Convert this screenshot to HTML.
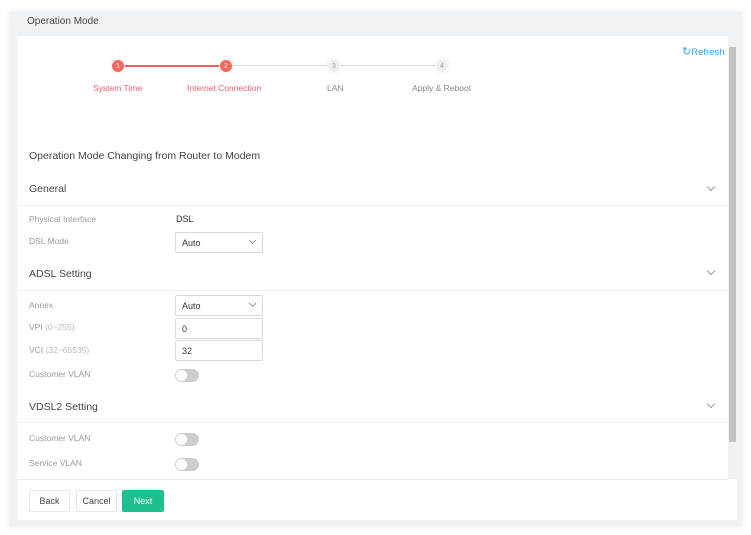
<!DOCTYPE html><html><head><style>
*{margin:0;padding:0;box-sizing:border-box}
body{width:751px;height:535px;background:#fff;font-family:"Liberation Sans",sans-serif;position:relative;overflow:hidden;font-size:9px;color:#666}
.a{position:absolute;white-space:nowrap}
.panel{left:9px;top:12px;width:733px;height:515px;background:#f0f3f5;box-shadow:0 0 6px rgba(0,0,0,.08)}
.card{left:17px;top:36px;width:720px;height:484px;background:#fff}
.sb{left:728px;top:36px;width:9px;height:443px;background:#f1f1f1}
.th{left:729px;top:47px;width:7px;height:395px;background:#c1c1c1}
.line{height:1px;background:#eceff1;left:17px;width:711px}
.lbl{color:#999;font-size:8.5px}
.h{color:#444;font-size:10.5px}
.box{border:1px solid #d9d9d9;border-radius:2px;background:#fff;width:88px;height:21px;left:175px;font-size:9px;color:#333;padding:5px 6px}
.chev{width:6px;height:6px;border-right:1px solid #999;border-bottom:1px solid #999;transform:rotate(45deg)}
.tg{left:175px;width:24px;height:13px;border-radius:7px;background:#ccc}
.tg::after{content:"";position:absolute;left:1px;top:1px;width:11px;height:11px;border-radius:50%;background:#fff}
.dot{width:14px;height:14px;border-radius:50%;font-size:7px;text-align:center;line-height:14px;color:#fff;border:1px solid #fff;box-shadow:0 0 2px rgba(0,0,0,.15)}
.btn{top:490px;height:22px;border:1px solid #e6e6e6;border-radius:2px;font-size:9px;color:#444;text-align:center;line-height:20px;background:#fff}
</style></head><body>
<div class="a panel"></div>
<div class="a" style="left:27px;top:16px;font-size:10px;color:#444">Operation Mode</div>
<div class="a card"></div>
<div class="a sb"></div><div class="a th"></div>
<div class="a" style="left:682px;top:45px;color:#3aa0e0;font-size:9.5px"><span style="font-size:11px">↻</span>Refresh</div>
<div class="a" style="left:124px;top:65px;width:100px;height:2px;background:#ef5c6e"></div>
<div class="a" style="left:232px;top:65px;width:210px;height:1px;background:#ddd"></div>
<div class="a dot" style="left:111px;top:59px;background:#ef6a5e">1</div>
<div class="a dot" style="left:219px;top:59px;background:#ef6a5e">2</div>
<div class="a dot" style="left:327px;top:59px;background:#eee;color:#999">3</div>
<div class="a dot" style="left:435px;top:59px;background:#eee;color:#999">4</div>
<div class="a" style="left:93px;top:83px;color:#ef5c6e;font-size:8.5px">System Time</div>
<div class="a" style="left:187px;top:83px;color:#ef5c6e;font-size:8.5px">Internet Connection</div>
<div class="a" style="left:327px;top:83px;color:#888;font-size:8.5px">LAN</div>
<div class="a" style="left:412px;top:83px;color:#888;font-size:8.5px">Apply &amp; Reboot</div>
<div class="a h" style="left:29px;top:150px">Operation Mode Changing from Router to Modem</div>
<div class="a h" style="left:29px;top:183px">General</div>
<div class="a chev" style="left:708px;top:184px"></div>
<div class="a line" style="top:205px"></div>
<div class="a lbl" style="left:29px;top:214px">Physical Interface</div>
<div class="a" style="left:176px;top:214px;color:#333;font-size:9px">DSL</div>
<div class="a lbl" style="left:29px;top:236px">DSL Mode</div>
<div class="a box" style="top:232px">Auto</div><div class="a chev" style="left:250px;top:238px;width:5px;height:5px"></div>
<div class="a h" style="left:29px;top:268px">ADSL Setting</div>
<div class="a chev" style="left:708px;top:268px"></div>
<div class="a line" style="top:290px"></div>
<div class="a lbl" style="left:29px;top:300px">Annex</div>
<div class="a box" style="top:295px">Auto</div><div class="a chev" style="left:250px;top:301px;width:5px;height:5px"></div>
<div class="a lbl" style="left:29px;top:322px">VPI <span style="color:#bbb">(0~255)</span></div>
<div class="a box" style="top:318px">0</div>
<div class="a lbl" style="left:29px;top:345px">VCI <span style="color:#bbb">(32~65535)</span></div>
<div class="a box" style="top:340px">32</div>
<div class="a lbl" style="left:29px;top:369px">Customer VLAN</div>
<div class="a tg" style="top:369px"></div>
<div class="a h" style="left:29px;top:401px">VDSL2 Setting</div>
<div class="a chev" style="left:708px;top:401px"></div>
<div class="a line" style="top:422px"></div>
<div class="a lbl" style="left:29px;top:433px">Customer VLAN</div>
<div class="a tg" style="top:433px"></div>
<div class="a lbl" style="left:29px;top:458px">Service VLAN</div>
<div class="a tg" style="top:458px"></div>
<div class="a line" style="top:479px;background:#e8ebed"></div>
<div class="a btn" style="left:29px;width:41px">Back</div>
<div class="a btn" style="left:76px;width:41px">Cancel</div>
<div class="a btn" style="left:122px;width:42px;background:#1fbf8f;border-color:#1fbf8f;color:#fff">Next</div>
</body></html>
